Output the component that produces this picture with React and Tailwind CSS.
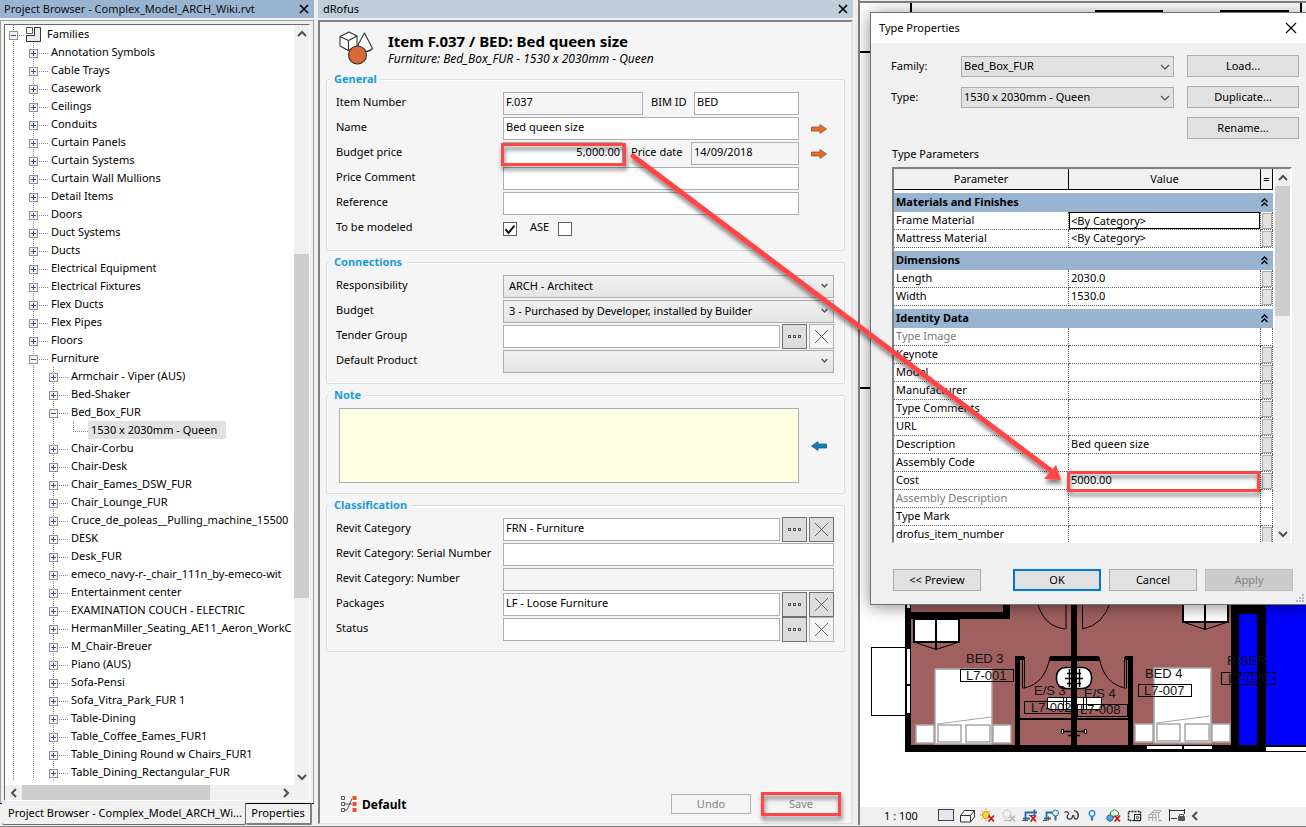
import React from 'react';

const TREE = [
  [0, 'Families', 'open'],
  [1, 'Annotation Symbols'],
  [1, 'Cable Trays'],
  [1, 'Casework'],
  [1, 'Ceilings'],
  [1, 'Conduits'],
  [1, 'Curtain Panels'],
  [1, 'Curtain Systems'],
  [1, 'Curtain Wall Mullions'],
  [1, 'Detail Items'],
  [1, 'Doors'],
  [1, 'Duct Systems'],
  [1, 'Ducts'],
  [1, 'Electrical Equipment'],
  [1, 'Electrical Fixtures'],
  [1, 'Flex Ducts'],
  [1, 'Flex Pipes'],
  [1, 'Floors'],
  [1, 'Furniture', 'open'],
  [2, 'Armchair - Viper (AUS)'],
  [2, 'Bed-Shaker'],
  [2, 'Bed_Box_FUR', 'open'],
  [3, '1530 x 2030mm - Queen'],
  [2, 'Chair-Corbu'],
  [2, 'Chair-Desk'],
  [2, 'Chair_Eames_DSW_FUR'],
  [2, 'Chair_Lounge_FUR'],
  [2, 'Cruce_de_poleas__Pulling_machine_15500'],
  [2, 'DESK'],
  [2, 'Desk_FUR'],
  [2, 'emeco_navy-r-_chair_111n_by-emeco-wit'],
  [2, 'Entertainment center'],
  [2, 'EXAMINATION COUCH - ELECTRIC'],
  [2, 'HermanMiller_Seating_AE11_Aeron_WorkC'],
  [2, 'M_Chair-Breuer'],
  [2, 'Piano (AUS)'],
  [2, 'Sofa-Pensi'],
  [2, 'Sofa_Vitra_Park_FUR 1'],
  [2, 'Table-Dining'],
  [2, 'Table_Coffee_Eames_FUR1'],
  [2, 'Table_Dining Round w Chairs_FUR1'],
  [2, 'Table_Dining_Rectangular_FUR'],
];

const PARAMS = [
  { group: 'Materials and Finishes' },
  { name: 'Frame Material', value: '<By Category>', btn: true, active: true },
  { name: 'Mattress Material', value: '<By Category>', btn: true },
  { group: 'Dimensions' },
  { name: 'Length', value: '2030.0', btn: true },
  { name: 'Width', value: '1530.0', btn: true },
  { group: 'Identity Data' },
  { name: 'Type Image', value: '', dim: true },
  { name: 'Keynote', value: '', btn: true },
  { name: 'Model', value: '', btn: true },
  { name: 'Manufacturer', value: '', btn: true },
  { name: 'Type Comments', value: '', btn: true },
  { name: 'URL', value: '', btn: true },
  { name: 'Description', value: 'Bed queen size', btn: true },
  { name: 'Assembly Code', value: '', btn: true },
  { name: 'Cost', value: '5000.00', btn: true },
  { name: 'Assembly Description', value: '', dim: true },
  { name: 'Type Mark', value: '' },
  { name: 'drofus_item_number', value: '', btn: true },
];

function CloseIcon({ thin }) {
  return (
    <svg width="12" height="12" viewBox="0 0 12 12" fill="none" stroke="#000" strokeWidth={thin ? 1.1 : 1.7} aria-hidden="true">
      <path d={thin ? 'M1 1 11 11M11 1 1 11' : 'M2 2 10 10M10 2 2 10'} />
    </svg>
  );
}

function Chevron({ dir, size = 10, color = '#505050', width = 2 }) {
  const paths = { up: 'M1 7 5 3 9 7', down: 'M1 3 5 7 9 3', left: 'M7 1 3 5 7 9', right: 'M3 1 7 5 3 9' };
  return (
    <svg width={size} height={size} viewBox="0 0 10 10" fill="none" stroke={color} strokeWidth={width} aria-hidden="true">
      <path d={paths[dir]} />
    </svg>
  );
}

function Branch({ level, open }) {
  const x = 8 + level * 20;
  const width = [21, 46, 66, 83][level];
  const leaf = level === 3;
  const rails = Array.from({ length: level }, (_, i) => 8 + i * 20).filter((r) => r !== x);
  return (
    <svg className="shrink-0" width={width} height="18" aria-hidden="true">
      <g stroke="#8c8c8c" strokeDasharray="1 1" fill="none" shapeRendering="crispEdges">
        {rails.map((r) => (
          <path key={r} d={`M${r}.5 0V18`} />
        ))}
        <path d={leaf ? `M${x}.5 0V10` : `M${x}.5 0V18`} />
        <path d={`M${x} 10.5H${leaf ? width : x + (level === 0 ? 12 : 16)}`} />
      </g>
      {!leaf && (
        <g shapeRendering="crispEdges">
          <rect x={x - 3.5} y="6.5" width="8" height="8" fill="#f4f4f4" stroke="#919191" />
          <path d={open ? `M${x - 1} 10.5h5` : `M${x - 1} 10.5h5M${x + 1}.5 8v5`} transform="translate(-1 0)" stroke="#2f4f9f" />
        </g>
      )}
    </svg>
  );
}

function TreeRow({ level, text, open }) {
  return (
    <li className="flex h-[18px] items-center whitespace-nowrap">
      <Branch level={level} open={open} />
      {level === 0 && (
        <svg className="mr-[6px] shrink-0" width="15" height="15" viewBox="0 0 15 15" aria-hidden="true">
          <path d="M8.500 .5H14.500V14.500H.5V8.500H8.500Z" fill="#e8ebf2" stroke="#333" />
          <path d="M.5 .5H6.500V6.500H.5Z" fill="#fff" stroke="#555" />
          <path d="M8.500 .5V8.500H.5" fill="none" stroke="#333" />
        </svg>
      )}
      {level === 3 ? <span className="bg-[#e2e2e2] pr-[9px] pl-[3px] leading-[18px]">{text}</span> : <span className="leading-[18px]">{text}</span>}
    </li>
  );
}

function ProjectBrowser() {
  return (
    <aside className="flex w-[314px] shrink-0 flex-col">
      <header className="flex h-[18px] items-center justify-between bg-[#99b4d1] pr-[4px] pl-[4px]">
        <h2 className="leading-[18px] text-[#111]">Project Browser - Complex_Model_ARCH_Wiki.rvt</h2>
        <button type="button" aria-label="Close project browser"><CloseIcon /></button>
      </header>
      <div className="mt-[2px] flex flex-1 flex-col border border-b-0 border-[#a0a0a0] p-[3px] pb-[2px]">
        <div className="flex flex-1 flex-col border border-t-[#696969] border-r-white border-b-white border-l-[#696969]">
          <div className="flex flex-1">
            <ul className="min-w-0 flex-1 overflow-hidden bg-white">
              {TREE.map(([level, text, state]) => (
                <TreeRow key={text} level={level} text={text} open={state === 'open'} />
              ))}
            </ul>
            <div className="flex w-[15px] shrink-0 flex-col items-center bg-[#f0f0f0]">
              <div className="flex h-[18px] items-center"><Chevron dir="up" /></div>
              <div className="flex flex-1 flex-col self-stretch">
                <div className="flex-[211]" />
                <div className="flex-[343] bg-[#cdcdcd]" />
                <div className="flex-[171]" />
              </div>
              <div className="flex h-[16px] items-center"><Chevron dir="down" /></div>
            </div>
          </div>
          <div className="flex h-[15px] items-center bg-[#f0f0f0] pr-[15px]">
            <div className="flex w-[17px] justify-center"><Chevron dir="left" /></div>
            <div className="flex flex-1 self-stretch">
              <div className="flex-[188] bg-[#cdcdcd]" />
              <div className="flex-[68]" />
            </div>
            <div className="flex w-[16px] justify-center"><Chevron dir="right" /></div>
          </div>
        </div>
      </div>
      <div className="flex h-[22px]">
        <div className="w-[2px] border-t border-black" />
        <button type="button" className="w-[244px] rounded-b-[2px] border-r border-b border-[#696969] pl-[6px] text-left">Project Browser - Complex_Model_ARCH_Wi...</button>
        <button type="button" className="w-[66px] rounded-b-[2px] border-t border-r-2 border-b-2 border-t-black border-r-[#808080] border-b-[#808080] text-center">Properties</button>
        <div className="flex-1 border-t border-black" />
      </div>
    </aside>
  );
}

function Group({ title, children }) {
  return (
    <fieldset className="min-w-0 rounded-[3px] border border-[#d5dfe5] pr-[10px] pb-[9px] pl-[9px] shadow-[inset_0_0_0_1px_#fff]">
      <legend className="-ml-[6px] bg-[#f5f5f5] px-1 leading-[16px] font-bold text-[#1a9bd7]">{title}</legend>
      <div className="pt-[4px]">{children}</div>
    </fieldset>
  );
}

function Row({ id, label, children }) {
  return (
    <div className="grid h-[25px] grid-cols-[167px_minmax(0,1fr)]">
      <label htmlFor={id} className="leading-[22px] whitespace-nowrap">{label}</label>
      <div className="flex items-center">{children}</div>
    </div>
  );
}

function Field({ id, value = '', muted, right, className = 'flex-1' }) {
  return (
    <input
      id={id}
      type="text"
      defaultValue={value}
      readOnly={muted}
      className={`h-[23px] min-w-0 border border-[#abadb3] px-[2px] pb-[4px] outline-none ${muted ? 'bg-[#f5f5f5]' : 'bg-white'} ${right ? 'text-right' : ''} ${className}`}
    />
  );
}

function FormSelect({ id, value }) {
  return (
    <div className="relative flex flex-1">
      <select id={id} defaultValue={value} className="h-[23px] flex-1 appearance-none border border-[#acacac] bg-linear-to-b from-[#f0f0f0] to-[#e5e5e5] px-[5px] outline-none">
        <option>{value}</option>
      </select>
      <span className="pointer-events-none absolute top-[7px] right-[6px]"><Chevron dir="down" size={7} width={2} /></span>
    </div>
  );
}

function LookupButtons({ name, clearable }) {
  return (
    <div className="flex shrink-0 gap-[2px] pl-[2px]">
      <button type="button" aria-label={`Choose ${name}`} className="flex h-[25px] w-[25px] items-center justify-center border border-[#707070] bg-[#dddddd]">
        <svg width="13" height="3" viewBox="0 0 13 3" fill="none" stroke="#555" shapeRendering="crispEdges" aria-hidden="true">
          <path d="M.5 .5h2v2h-2zM5.500 .5h2v2h-2zM10.500 .5h2v2h-2z" />
        </svg>
      </button>
      <button
        type="button"
        aria-label={`Clear ${name}`}
        className={`flex h-[25px] w-[25px] items-center justify-center border ${clearable ? 'border-[#707070] bg-[#dddddd]' : 'border-[#adb2b5] bg-[#f4f4f4]'}`}
      >
        <svg width="13" height="13" viewBox="0 0 13 13" stroke="#555" strokeWidth="0.9" aria-hidden="true">
          <path d="M0 0 13 13M13 0 0 13" />
        </svg>
      </button>
    </div>
  );
}

function SyncArrow({ back, label }) {
  return (
    <button type="button" aria-label={label} className="flex w-[35px] shrink-0 justify-center pl-[4px]">
      <svg width="16" height="10" viewBox="0 0 16 10" aria-hidden="true">
        <path d={back ? 'M.5 5 7 .5V3H15.500V7H7V9.500Z' : 'M15.500 5 9 .5V3H.5V7H9V9.500Z'} fill={back ? '#0f7fae' : '#f26a21'} stroke={back ? '#0a5f86' : '#7b5140'} strokeWidth="0.8" />
      </svg>
    </button>
  );
}

function Check({ id, checked }) {
  return (
    <span className="relative flex">
      <input id={id} type="checkbox" defaultChecked={checked} className="peer h-[14px] w-[14px] appearance-none border border-[#606060] bg-white" />
      <svg className="pointer-events-none absolute top-[2px] left-[2px] hidden peer-checked:block" width="10" height="10" viewBox="0 0 10 10" aria-hidden="true">
        <path d="M.5 5 3.500 9 9.500 1.500" fill="none" stroke="#111" strokeWidth="2" />
      </svg>
    </span>
  );
}

function DrofusPanel() {
  return (
    <section className="ml-[4px] flex w-[535px] shrink-0 flex-col">
      <header className="flex h-[18px] items-center justify-between bg-[#bfcddb] pr-[4px] pl-[5px]">
        <h2 className="leading-[18px]">dRofus</h2>
        <button type="button" aria-label="Close dRofus"><CloseIcon /></button>
      </header>
      <form className="mt-[2px] mb-[1px] flex flex-1 flex-col border-t-2 border-r-2 border-b border-l-2 border-t-[#808080] border-r-[#e3e3e3] border-b-[#e3e3e3] border-l-[#808080] bg-[#f5f5f5] pr-[6px] pl-[6px]">
        <div className="flex items-start gap-[14px] pt-[9px] pb-[4px] pl-[13px]">
          <svg width="35" height="34" viewBox="0 0 35 34" strokeLinejoin="round" stroke="#333" strokeWidth="1.1" aria-hidden="true">
            <path d="M1 5.500 10 1 18 5V15L9.500 19.500 1 15Z" fill="#fff" />
            <path d="M1 5.500 9.500 9.500 18 5M9.500 9.500V19.500" fill="none" />
            <path d="M25.500 2 33.500 17.500Q30 21 25 20.500L19 14Z" fill="#fff" />
            <circle cx="18.500" cy="24" r="9" fill="#d96a36" />
          </svg>
          <div>
            <h1 className="text-[15px] leading-[20px] font-bold">Item F.037 / BED: Bed queen size</h1>
            <p className="text-[12px] leading-[16px] italic">Furniture: Bed_Box_FUR - 1530 x 2030mm - Queen</p>
          </div>
        </div>

        <div className="flex flex-col gap-[3px]">
          <Group title="General">
            <Row id="item-number" label="Item Number">
              <Field id="item-number" value="F.037" muted />
              <label htmlFor="bim-id" className="w-[51px] self-start pl-[8px] leading-[22px]">BIM ID</label>
              <Field id="bim-id" value="BED" className="w-[105px]" />
              <span className="w-[35px]" />
            </Row>
            <Row id="name" label="Name">
              <Field id="name" value="Bed queen size" />
              <SyncArrow label="Send name to model" />
            </Row>
            <Row id="budget-price" label="Budget price">
              <Field id="budget-price" value="5,000.00" right />
              <label htmlFor="price-date" className="w-[68px] self-start pl-[8px] leading-[22px]">Price date</label>
              <Field id="price-date" value="14/09/2018" muted className="w-[108px]" />
              <SyncArrow label="Send price to model" />
            </Row>
            <Row id="price-comment" label="Price Comment">
              <Field id="price-comment" />
              <span className="w-[35px]" />
            </Row>
            <Row id="reference" label="Reference">
              <Field id="reference" />
              <span className="w-[35px]" />
            </Row>
            <Row id="modeled" label="To be modeled">
              <Check id="modeled" checked />
              <label htmlFor="ase" className="w-[41px] self-start pl-[13px] leading-[22px]">ASE</label>
              <Check id="ase" />
            </Row>
          </Group>

          <Group title="Connections">
            <Row id="responsibility" label="Responsibility"><FormSelect id="responsibility" value="ARCH - Architect" /></Row>
            <Row id="budget" label="Budget"><FormSelect id="budget" value="3 - Purchased by Developer, installed by Builder" /></Row>
            <Row id="tender" label="Tender Group">
              <Field id="tender" />
              <LookupButtons name="tender group" />
            </Row>
            <Row id="product" label="Default Product"><FormSelect id="product" value="" /></Row>
          </Group>

          <Group title="Note">
            <div className="flex h-[77px] items-center pl-[3px]">
              <textarea aria-label="Note" className="h-[75px] flex-1 resize-none border border-[#abadb3] bg-[#ffffe1] outline-none" />
              <SyncArrow back label="Read note from model" />
            </div>
          </Group>

          <Group title="Classification">
            <Row id="category" label="Revit Category">
              <Field id="category" value="FRN - Furniture" />
              <LookupButtons name="category" clearable />
            </Row>
            <Row id="serial" label="Revit Category: Serial Number"><Field id="serial" /></Row>
            <Row id="category-number" label="Revit Category: Number"><Field id="category-number" muted /></Row>
            <Row id="packages" label="Packages">
              <Field id="packages" value="LF - Loose Furniture" />
              <LookupButtons name="packages" clearable />
            </Row>
            <Row id="status" label="Status">
              <Field id="status" />
              <LookupButtons name="status" />
            </Row>
          </Group>
        </div>

        <footer className="mt-auto flex items-center pr-[4px] pb-[9px] pl-[15px]">
          <svg width="16" height="17" viewBox="0 0 16 17" aria-hidden="true">
            <path d="M.5 .5h3v3h-3zM.5 6.500h3v3h-3zM.5 12.500h3v3h-3zM4 8H11M4 14H6L11 2.500" fill="none" stroke="#555" />
            <path d="M11.500 0h4v4h-4zM11.500 6h4v4h-4zM11.500 12h4v4h-4z" fill="#e8502a" />
          </svg>
          <span className="ml-[5px] pt-[2px] text-[12px] font-bold">Default</span>
          <button type="button" disabled className="ml-auto h-[20px] w-[80px] border border-[#adb2b5] bg-[#f4f4f4] text-[#838383]">Undo</button>
          <button type="submit" disabled className="ml-[10px] h-[20px] w-[80px] border border-[#adb2b5] bg-[#f4f4f4] text-[#838383]">Save</button>
        </footer>
      </form>
    </section>
  );
}

function Bed({ x, y }) {
  return (
    <g fill="#fff" stroke="#a6a6a6" strokeWidth="1.500">
      <rect x={x} y={y} width="57" height="75" />
      <rect x={x - 19} y={y + 56} width="18" height="18" />
      <rect x={x + 58} y={y + 56} width="18" height="18" />
      <rect x={x + 3} y={y + 56} width="23" height="17" />
      <rect x={x + 31} y={y + 56} width="24" height="17" />
      <path d={`M${x + 2} ${y + 55} ${x + 56} ${y + 48}`} strokeWidth="1" />
    </g>
  );
}

function Wardrobe({ x, y, h }) {
  return (
    <g stroke="#000" fill="none">
      <rect x={x} y={y} width="45" height={h} fill="#fff" strokeWidth="2" />
      <path d={`M${x + 22} ${y}v${h + 7}`} strokeWidth="2" />
      <path d={`M${x} ${y + h}l22 7.500 23 -7.500`} />
    </g>
  );
}

function FloorPlan() {
  return (
    <svg className="h-[804px] w-full" role="img" aria-label="Floor plan">
      <g transform="translate(-860 -3)">
        <g fill="#000">
          <rect x="910" y="3" width="2" height="10" />
          <rect x="1095" y="10" width="68" height="2" />
          <rect x="1220" y="10" width="69" height="2" />
          <rect x="1300" y="3" width="2" height="10" />
          <rect x="860" y="51" width="12" height="2" />
          <rect x="860" y="387" width="12" height="2" />
        </g>
        <rect x="908" y="595" width="326" height="152" fill="#a06060" />
        <rect x="1236" y="595" width="600" height="151" fill="#0000ff" />
        <rect x="871.5" y="647.5" width="34" height="68" fill="#fff" stroke="#000" />
        <Wardrobe x={914} y={619} h={23} />
        <Wardrobe x={1183} y={600} h={22} />
        <Bed x={935} y={669} />
        <Bed x={1154} y={668} />
        <g fill="none" stroke="#000">
          <path d="M1037 600Q1042 626 1065 629M1066 600V629M1082.500 600V629Q1104 625 1111 600" />
          <path d="M1022.500 657V688H1024.500V657M1024 688Q1045 684 1050 657" />
          <path d="M1126.500 657V688H1124.500V657M1125 688Q1104 684 1099 657" />
          <path d="M1020 719H1130" strokeWidth="2" />
          <path d="M1077 716.500H1127" />
        </g>
        <g fill="#fff" stroke="#000">
          <rect x="1056.500" y="667.500" width="35" height="21" rx="9" strokeWidth="1.500" />
          <rect x="1047.500" y="697.500" width="54" height="12" rx="1" />
          <path d="M1063.500 697V709M1066.500 697V709M1083.500 697V709M1086.500 697V709" />
        </g>
        <g stroke="#000" fill="none">
          <path d="M1067 673.500H1081M1065 678.500H1083M1067 683.500H1081M1069.500 669V687M1079.500 669V687" strokeWidth="1.500" />
          <path d="M1062 731.500H1087M1068 735.500H1080" strokeWidth="1.500" />
          <path d="M1061.500 729.500h2v4h-2zM1084.500 729.500h2v4h-2z" fill="#fff" />
        </g>
        <g fill="#000">
          <rect x="905" y="600" width="6" height="152" />
          <rect x="905" y="612" width="105" height="7" />
          <rect x="1003" y="600" width="7" height="18" />
          <rect x="905" y="745" width="361" height="7" />
          <rect x="1266" y="745" width="570" height="2" />
          <rect x="1266" y="751" width="570" height="1" />
          <rect x="1015" y="656" width="5" height="90" />
          <rect x="1015" y="656" width="9" height="4" />
          <rect x="1050" y="656" width="49" height="5" />
          <rect x="1071" y="600" width="6" height="147" />
          <rect x="1125" y="656" width="8" height="4" />
          <rect x="1128" y="656" width="5" height="90" />
          <rect x="1231" y="600" width="8" height="150" />
          <rect x="1231" y="606" width="35" height="8" />
          <rect x="1257" y="606" width="9" height="144" />
          <rect x="1239" y="603" width="27" height="4" />
        </g>
        <g fill="#fff">
          <rect x="907" y="649" width="3" height="35" />
          <rect x="907" y="686" width="3" height="27" />
          <rect x="907" y="600" width="3" height="8" />
          <rect x="1147" y="746" width="35" height="3" />
          <rect x="1184" y="746" width="28" height="3" />
        </g>
        <g fill="none" stroke="#000">
          <rect x="960.500" y="669.500" width="53" height="12" />
          <rect x="1024.500" y="701.500" width="48" height="12" />
          <rect x="1077.500" y="704.500" width="50" height="12" />
          <rect x="1138.500" y="684.500" width="53" height="12" />
          <rect x="1221.500" y="672.500" width="53" height="12" />
        </g>
        <g fill="#111" className="font-['Liberation_Sans',sans-serif] text-[13px]">
          <text x="966" y="663">BED 3</text>
          <text x="966" y="680">L7-001</text>
          <text x="1034" y="695">E/S 3</text>
          <text x="1031" y="712">L7-002</text>
          <text x="1084" y="698">E/S 4</text>
          <text x="1080" y="714">L7-008</text>
          <text x="1145" y="678">BED 4</text>
          <text x="1144" y="695">L7-007</text>
          <text x="1227" y="665">RISER</text>
          <text x="1228" y="683">L7-026</text>
        </g>
      </g>
    </svg>
  );
}

function DialogButton({ children, kind = 'plain', className = 'w-[88px]' }) {
  const looks = {
    plain: 'border border-[#adadad] bg-[#e1e1e1]',
    primary: 'border-2 border-[#0078d7] bg-[#e1e1e1]',
    off: 'border border-[#bfbfbf] bg-[#cccccc] text-[#838383]',
  };
  return (
    <button type="button" disabled={kind === 'off'} className={`flex h-[22px] items-center justify-center ${looks[kind]} ${className}`}>
      {children}
    </button>
  );
}

function DialogSelect({ id, value }) {
  return (
    <div className="relative flex">
      <select id={id} defaultValue={value} className="h-[21px] min-w-0 flex-1 appearance-none border border-[#adadad] bg-[#e1e1e1] px-[2px] outline-none">
        <option>{value}</option>
      </select>
      <span className="pointer-events-none absolute top-[6px] right-[4px]"><Chevron dir="down" width={1.2} /></span>
    </div>
  );
}

function ParamTable() {
  return (
    <div className="mt-[5px] mr-px flex h-[376px] overflow-hidden border-t-2 border-r-2 border-b border-l-2 border-t-[#808080] border-r-white border-b-white border-l-[#808080] bg-white">
      <div className="min-w-0 flex-1 overflow-hidden">
        <table className="w-full table-fixed border-separate border-spacing-0 text-left">
          <colgroup>
            <col className="w-[175px]" />
            <col />
            <col className="w-[12px]" />
          </colgroup>
          <thead>
            <tr>
              <th className="h-[21px] border-r border-b border-black bg-[#f0f0f0] p-0 text-center font-normal">Parameter</th>
              <th className="h-[21px] border-r border-b border-black bg-[#f0f0f0] p-0 text-center font-normal">Value</th>
              <th className="h-[21px] border-r border-b border-black bg-[#f0f0f0] p-0 text-center font-normal">=</th>
            </tr>
          </thead>
          <tbody>
            {PARAMS.map((p) =>
              p.group ? (
                <tr key={p.group}>
                  <th colSpan={3} scope="colgroup" className="h-[22px] border-t-[3px] border-white bg-[#99b4d1] p-0 pr-[4px] pl-[2px]">
                    <div className="flex h-[19px] items-center justify-between font-bold">
                      {p.group}
                      <svg width="9" height="9" viewBox="0 0 9 9" fill="none" stroke="#000" strokeWidth="1.300" aria-hidden="true">
                        <path d="M1.500 4 4.500 1 7.500 4M1.500 8 4.500 5 7.500 8" />
                      </svg>
                    </div>
                  </th>
                </tr>
              ) : (
                <tr key={p.name}>
                  <th scope="row" className={`h-[18px] border-r border-b border-dotted border-[#606060] p-0 pb-[2px] pl-[2px] leading-[15px] font-normal whitespace-nowrap ${p.dim ? 'text-[#7a7a7a]' : ''}`}>{p.name}</th>
                  <td className="h-[18px] border-r border-b border-dotted border-[#606060] p-0">
                    <input type="text" aria-label={p.name} defaultValue={p.value} className={`block h-[17px] w-full outline-none ${p.active ? 'border border-black px-px pb-px' : 'px-[2px] pb-[2px]'}`} />
                  </td>
                  <td className="h-[18px] border-r border-b border-dotted border-[#606060] p-0">
                    {p.btn && <button type="button" aria-label={`Associate ${p.name}`} className="mx-auto block h-[16px] w-[10px] border border-[#a8a8a8] bg-[#e1e1e1]" />}
                  </td>
                </tr>
              ),
            )}
          </tbody>
        </table>
      </div>
      <div className="ml-[2px] flex w-[15px] flex-col items-center bg-[#f0f0f0]">
        <div className="flex h-[17px] items-center"><Chevron dir="up" /></div>
        <div className="flex flex-1 flex-col self-stretch">
          <div className="h-[130px] bg-[#cdcdcd]" />
        </div>
        <div className="flex h-[16px] items-center"><Chevron dir="down" /></div>
      </div>
    </div>
  );
}

function TypePropertiesDialog() {
  return (
    <div role="dialog" aria-label="Type Properties" className="absolute top-[9px] right-0 left-[10px] border border-r-0 border-[#707070] bg-[#f0f0f0] shadow-[0_2px_16px_rgba(0,0,0,0.45)]">
      <header className="flex h-[30px] items-center justify-between bg-white pr-[9px] pl-[8px]">
        <h2>Type Properties</h2>
        <button type="button" aria-label="Close dialog"><CloseIcon thin /></button>
      </header>
      <div className="grid grid-cols-[70px_minmax(0,1fr)_112px] items-center gap-y-[9px] pt-[12px] pr-[7px] pl-[20px]">
        <label htmlFor="family">Family:</label>
        <div className="pr-[13px]"><DialogSelect id="family" value="Bed_Box_FUR" /></div>
        <DialogButton className="w-full">Load...</DialogButton>
        <label htmlFor="type">Type:</label>
        <div className="pr-[13px]"><DialogSelect id="type" value="1530 x 2030mm - Queen" /></div>
        <DialogButton className="w-full">Duplicate...</DialogButton>
        <span className="col-span-2" />
        <DialogButton className="w-full">Rename...</DialogButton>
      </div>
      <div className="pr-[13px] pb-[13px] pl-[21px]">
        <h3 className="mt-[7px] leading-[16px]">Type Parameters</h3>
        <ParamTable />
        <div className="mt-[26px] flex gap-[8px] pl-px">
          <DialogButton>&lt;&lt; Preview</DialogButton>
          <div className="ml-auto flex gap-[8px]">
            <DialogButton kind="primary">OK</DialogButton>
            <DialogButton>Cancel</DialogButton>
            <DialogButton kind="off">Apply</DialogButton>
          </div>
        </div>
      </div>
      <svg className="absolute right-[2px] bottom-[2px]" width="8" height="8" fill="#b5b5b5" aria-hidden="true">
        <path d="M6 0h2v2h-2zM3 3h2v2h-2zM6 3h2v2h-2zM0 6h2v2h-2zM3 6h2v2h-2zM6 6h2v2h-2z" />
      </svg>
    </div>
  );
}

const RED_X = <path d="M8.500 7.500 14 13.500M14 7.500 8.500 13.500" stroke="#c81414" strokeWidth="1.800" fill="none" />;

const VIEW_TOOLS = [
  ['Detail level', <rect key="a" x=".5" y="1.500" width="15" height="11" fill="#e3e8f2" stroke="#444" />],
  ['Visual style', <path key="a" d="M1.500 7.500 5.500 2.500H15.500V9L11.500 14H1.500ZM1.500 7.500H11.500L15.500 2.500M11.500 7.500V14" fill="#f4f4f4" stroke="#333" />],
  ['Sun path', <g key="a"><circle cx="6" cy="7" r="3.500" fill="#ffd34d" stroke="#d18b00" /><path d="M6 .5V2M6 12V13.500M0 7H1.500M1.500 2.500 2.700 3.700M10.500 2.500 9.300 3.700M1.500 11.500 2.700 10.300" stroke="#d18b00" />{RED_X}</g>],
  ['Shadows', <g key="a" fill="none" stroke="#b4b4b4"><circle cx="6" cy="6" r="4" strokeDasharray="2 1" /><path d="M3 12.500H9" /><path d="M8.500 7.500 14 13.500M14 7.500 8.500 13.500" strokeWidth="1.600" /></g>],
  ['Crop view', <g key="a"><path d="M3.500 13V4.500H15M1 10.500H8M12.500 1.500V8" fill="none" stroke="#1d6fae" strokeWidth="1.800" /><path d="M0 12.500H6M7 7.500H12" stroke="#555" fill="none" />{RED_X}</g>],
  ['Show crop region', <g key="a" fill="none"><path d="M3.500 13V4.500H9M1 10.500H8" stroke="#1d6fae" strokeWidth="1.800" /><path d="M0 12.500H4" stroke="#555" /><path d="M5.500 8.500V12.500" stroke="#d01818" /><circle cx="12.500" cy="5" r="3" fill="#dff0ff" stroke="#1d6fae" /><path d="M12.500 8V12.500" stroke="#1d6fae" strokeWidth="2" /></g>],
  ['Temporary hide', <path key="a" d="M.5 4.500C2 3 3.500 3.500 5 6M5 6C2.500 7 2.500 10.500 5 11C8 11.500 8.500 9 8.500 8C9 7 10.500 7.500 10 9C10 11.500 13 12 14 9C15 6.500 14 5 12.500 3.500L10 2.500" fill="none" stroke="#2f3f4f" strokeWidth="1.300" />],
  ['Reveal hidden', <g key="a"><circle cx="7" cy="5.500" r="2.800" fill="#dff0ff" stroke="#1d7fd0" strokeWidth="1.200" /><path d="M5.800 8.500H8.200V12.500H5.800Z" fill="#1d7fd0" /></g>],
  ['Worksharing', <g key="a"><path d="M1 8.500 4 6.500 7 8.500V11.500L4 13.500 1 11.500Z" fill="#5aa7dc" stroke="#1d5f9e" /><path d="M4.500 4 8.500 1.500 12.500 4V7L8.500 9 4.500 7Z" fill="#dff2df" stroke="#2f8f3a" />{RED_X}</g>],
  ['Temporary view', <g key="a" fill="none" stroke="#222"><rect x="1.500" y="3.500" width="12" height="9" strokeDasharray="2 1" strokeWidth="1.500" /><rect x="7.500" y="6.500" width="6" height="6" fill="#fff" /><circle cx="10.500" cy="9.500" r="1.200" /></g>],
  ['Analytical model', <path key="a" d="M1 7 6 2.500H13V4M1 6.500H8V13M1 6.500V13M4.500 6.500V13M1 9.500H8M10.500 4V10M4 4.500H12M10 12.500H14" fill="none" stroke="#a8a8a8" />],
  ['Constraints', <g key="a"><path d="M.5 1V13M15.500 1V6M.5 2.500H15.500M2 10.500H8" fill="none" stroke="#333" /><rect x="9" y="8" width="7" height="5" rx="1" fill="#555" /><path d="M10.500 8V6.500H14.500V8" fill="none" stroke="#555" /></g>],
];

function ModelView() {
  return (
    <main className="ml-[5px] flex min-w-0 flex-1 flex-col border-l-2 border-[#808080] pt-px">
      <div className="relative flex-1 border-t-2 border-[#808080] bg-white">
        <FloorPlan />
        <TypePropertiesDialog />
      </div>
      <div className="flex h-[18px] items-center bg-[#f0f0f0]">
        <span className="w-[78px] pl-[24px]">1 : 100</span>
        <div className="flex items-center gap-[5px]">
          {VIEW_TOOLS.map(([label, art]) => (
            <button key={label} type="button" aria-label={label}>
              <svg className="block" width="16" height="16" viewBox="0 0 16 16" aria-hidden="true">{art}</svg>
            </button>
          ))}
          <button type="button" aria-label="Collapse toolbar"><Chevron dir="left" /></button>
        </div>
      </div>
    </main>
  );
}

function Annotations() {
  return (
    <svg className="pointer-events-none absolute top-0 left-0 h-[827px] w-[1306px]" aria-hidden="true">
      <defs>
        <filter id="drop" x="-10%" y="-50%" width="120%" height="250%">
          <feDropShadow dx="1" dy="4" stdDeviation="2" floodColor="#000" floodOpacity="0.5" />
        </filter>
      </defs>
      <g fill="none" stroke="#ff4444" strokeWidth="3">
        <rect x="502.500" y="144.500" width="122" height="20" filter="url(#drop)" />
        <rect x="762.500" y="793.500" width="77" height="21" filter="url(#drop)" />
        <rect x="1068.500" y="472.500" width="190" height="18" filter="url(#drop)" />
      </g>
      <g filter="url(#drop)">
        <path d="M633 156 1050 470" stroke="#ff4444" strokeWidth="5" strokeLinecap="round" />
        <path d="M1061 480 1056 465 1044 479Z" fill="#ff4444" />
      </g>
    </svg>
  );
}

export default function App() {
  return (
    <div className="relative flex min-h-screen flex-col overflow-hidden border-b border-[#808080] bg-[#f0f0f0] pb-px font-['Noto_Sans','Open_Sans',sans-serif] text-[11px] text-black">
      <div className="flex flex-1">
        <ProjectBrowser />
        <DrofusPanel />
        <ModelView />
      </div>
      <Annotations />
    </div>
  );
}
